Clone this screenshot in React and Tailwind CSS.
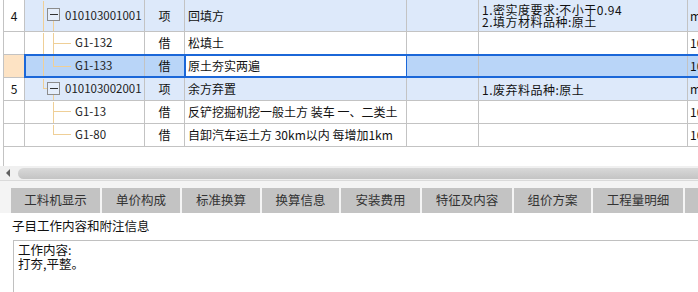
import React from 'react'

const FONT = { fontFamily: '"Noto Sans CJK SC", "Noto Sans", sans-serif' }
const LINE = '#efcf97'

function Tree({ h, parts }) {
    return (
        <svg width="50" height={h} className="shrink-0" shapeRendering="crispEdges">
            {parts.map((p, i) =>
                p.box ? (
                    <g key={i}>
                        <rect x="22.5" y={p.y - 6 + 0.5} width="12" height="12" fill="#ffffff" fillOpacity="0.25" stroke="#8c8c8c" />
                        <line x1="25" x2="33" y1={p.y + 0.5} y2={p.y + 0.5} stroke="#333" />
                    </g>
                ) : (
                    <line key={i} x1={p.x1 + 0.5} x2={p.x2 + 0.5} y1={p.y1 + 0.5} y2={p.y2 + 0.5} stroke={LINE} />
                )
            )}
        </svg>
    )
}

function Cell({ w, bg = 'bg-white', className = '', children }) {
    return (
        <div className={`${w} ${bg} shrink-0 border-r border-[#c3c3c3] flex items-center overflow-hidden whitespace-nowrap ${className}`}>
            {children}
        </div>
    )
}

const rows = [
    {
        h: 'h-[32px]', ph: 31, num: '4', item: true, code: '010103001001', type: '项', name: '回填方',
        feat: ['1.密实度要求:不小于0.94', '2.填方材料品种:原土'], last: 'm3',
        tree: [
            { x1: 18, x2: 18, y1: 0, y2: 31 },
            { x1: 28, x2: 28, y1: 20, y2: 31 },
            { box: true, y: 14 },
        ],
    },
    {
        h: 'h-[23px]', ph: 22, code: 'G1-132', type: '借', name: '松填土', last: '10',
        tree: [
            { x1: 18, x2: 18, y1: 0, y2: 22 },
            { x1: 28, x2: 28, y1: 0, y2: 22 },
            { x1: 28, x2: 45, y1: 11, y2: 11 },
        ],
    },
    {
        h: 'h-[23px]', ph: 22, code: 'G1-133', type: '借', name: '原土夯实两遍', last: '10', selected: true,
        tree: [
            { x1: 18, x2: 18, y1: 0, y2: 22 },
            { x1: 28, x2: 28, y1: 0, y2: 11 },
            { x1: 28, x2: 45, y1: 11, y2: 11 },
        ],
    },
    {
        h: 'h-[23px]', ph: 22, num: '5', item: true, code: '010103002001', type: '项', name: '余方弃置',
        feat: ['1.废弃料品种:原土'], last: 'm3',
        tree: [
            { x1: 18, x2: 18, y1: 0, y2: 10 },
            { x1: 18, x2: 22, y1: 10, y2: 10 },
            { x1: 28, x2: 28, y1: 16, y2: 22 },
            { box: true, y: 10 },
        ],
    },
    {
        h: 'h-[23px]', ph: 22, code: 'G1-13', type: '借', name: '反铲挖掘机挖一般土方 装车 一、二类土', last: '10',
        tree: [
            { x1: 28, x2: 28, y1: 0, y2: 22 },
            { x1: 28, x2: 45, y1: 10, y2: 10 },
        ],
    },
    {
        h: 'h-[23px]', ph: 22, code: 'G1-80', type: '借', name: '自卸汽车运土方 30km以内 每增加1km', last: '10',
        tree: [
            { x1: 28, x2: 28, y1: 0, y2: 10 },
            { x1: 28, x2: 45, y1: 10, y2: 10 },
        ],
    },
]

function GridRow({ r }) {
    const bg = r.selected ? 'bg-[#b9d5f8]' : r.item ? 'bg-[#dde9fa]' : 'bg-white'
    const numBg = r.selected ? 'bg-[#fde3c4]' : 'bg-white'
    return (
        <div className={`flex ${r.h} border-b border-[#c3c3c3]`}>
            <Cell w="w-[21px]" bg={numBg} className="justify-center">{r.num}</Cell>
            <div className={`flex ${r.selected ? 'outline-2 outline-[#1b67d8] -outline-offset-1 relative z-10' : ''}`}>
                <Cell w="w-[120px]" bg={bg}>
                    <Tree h={r.ph} parts={r.tree} />
                    <span className={`text-[11.5px] text-[#222] ${r.item ? '-ml-[10px]' : ''}`}>{r.code}</span>
                </Cell>
                <Cell w="w-[40px]" bg={bg} className="justify-center">{r.type}</Cell>
                <Cell
                    w="w-[222px]"
                    bg={r.selected ? 'bg-white' : bg}
                    className={`pl-[3px] ${r.selected ? 'outline-2 outline-[#1b67d8] -outline-offset-1' : ''}`}
                >
                    {r.name}
                </Cell>
                <Cell w="w-[72px]" bg={bg} />
                <Cell w="w-[209px]" bg={bg} className="pl-[3px]">
                    {r.feat && (
                        <div className="leading-[12px] tracking-[0.5px] pt-[1px]">
                            {r.feat.map((f) => (
                                <div key={f}>{f}</div>
                            ))}
                        </div>
                    )}
                </Cell>
                <Cell w="w-[40px]" bg={bg} className="pl-[2px] border-r-0">{r.last}</Cell>
            </div>
        </div>
    )
}

const tabs = [
    ['工料机显示', 'w-[89px]'],
    ['单价构成', 'w-[78px]'],
    ['标准换算', 'w-[78px]'],
    ['换算信息', 'w-[77px]'],
    ['安装费用', 'w-[79px]'],
    ['特征及内容', 'w-[90px]'],
    ['组价方案', 'w-[77px]'],
    ['工程量明细', 'w-[90px]'],
    ['', 'w-[30px]'],
]

export default function App() {
    return (
        <div className="w-[698px] h-[292px] overflow-hidden bg-white text-[12px] text-[#111]" style={FONT}>
            <div className="pl-[3px] h-[166px] bg-white">
                <div className="border-l border-[#c3c3c3] h-full">
                    {rows.map((r, i) => (
                        <GridRow key={i} r={r} />
                    ))}
                </div>
            </div>

            {/* horizontal scrollbar */}
            <div className="flex items-center h-[14px] bg-[#f0f0f0] pl-[6px] pr-0">
                <span className="w-0 h-0 border-y-[4px] border-y-transparent border-r-[4px] border-r-[#606060] mr-[8px]" />
                <div className="flex-1 h-[11px] rounded-l-full bg-gradient-to-b from-[#d9d9d9] to-[#c4c4c4]" />
            </div>

            <div className="h-[1px] bg-[#dadada]" />

            {/* bottom panel */}
            <div className="bg-[#f4f4f4] pt-[7px] pl-[11px]">
                <div className="flex gap-[2px] h-[25px] text-[#333]">
                    {tabs.map(([t, w], i) => (
                        <div key={i} className={`${w} shrink-0 bg-[#c3c3c3] flex items-center justify-center text-[12.5px]`}>
                            {t}
                        </div>
                    ))}
                </div>
            </div>
            <div className="bg-white h-[200px] pl-[12px] pt-[3px]">
                <div className="leading-[20px] text-[12.5px]">子目工作内容和附注信息</div>
                <div className="mt-[4px] ml-[1px] h-[80px] border border-[#c0c0c0] border-r-0 pl-[4px] pt-[2px] leading-[14px] text-[12.5px]">
                    <div>工作内容:</div>
                    <div>打夯,平整。</div>
                </div>
            </div>
        </div>
    )
}
